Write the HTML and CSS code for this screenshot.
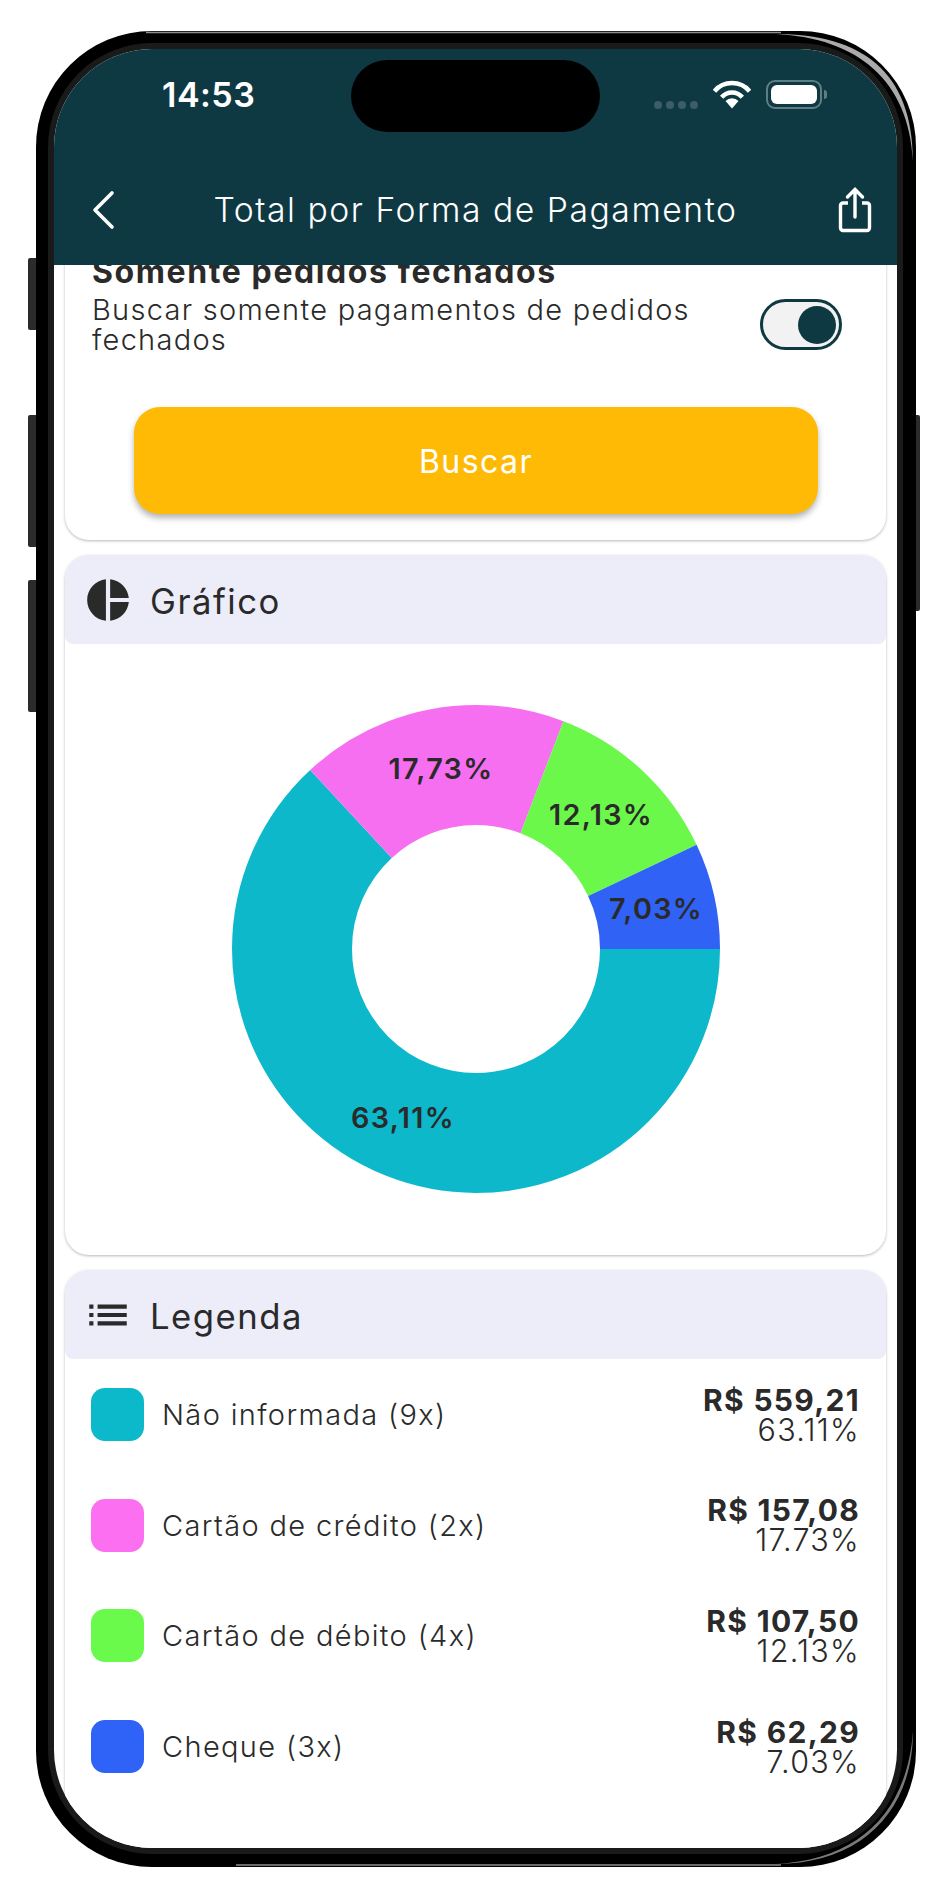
FILE: index.html
```html
<!DOCTYPE html>
<html lang="pt-BR">
<head>
    <meta charset="UTF-8">
    <meta name="viewport" content="width=device-width, initial-scale=1.0">
    <title>Total por Forma de Pagamento</title>
    <link rel="stylesheet" href="styles.css">
</head>
<body>
    <div class="phone">
        <span class="side-btn side-mute"></span>
        <span class="side-btn side-up"></span>
        <span class="side-btn side-down"></span>
        <span class="side-btn side-power"></span>

        <!-- metal edge of the frame -->
        <svg class="frame-edge" width="880" height="1836" viewBox="0 0 880 1836">
            <path d="M110 1.500H745" stroke="#8f8f8f" stroke-width="1.500" fill="none"/>
            <path d="M740 3C825 3 877 40 877 130C873 49 821 7 740 3Z" fill="#aaa"/>
            <path d="M877 1700C877 1780 825 1833 740 1833C820 1829 871 1784 877 1700Z" fill="#7a7a7a"/>
            <path d="M745 1834H200" stroke="#6a6a6a" stroke-width="2" fill="none"/>
        </svg>

        <div class="bezel">
            <div class="screen">
                <header class="topbar">
                    <div class="status">
                        <span class="time">14:53</span>
                        <span class="island"></span>
                        <div class="status-icons">
                            <span class="signal"><i></i><i></i><i></i><i></i></span>
                            <svg class="wifi" width="38" height="29" viewBox="0 0 38 29" fill="none">
                                <path d="M1.400 11.200A23 23 0 0 1 36.600 11.200" stroke="#fff" stroke-width="4.500"/>
                                <path d="M8.700 17.300A13.500 13.500 0 0 1 29.300 17.300" stroke="#fff" stroke-width="4.500"/>
                                <path d="M19 28.500L12.500 21A9 9 0 0 1 25.500 21Z" fill="#fff"/>
                            </svg>
                            <span class="battery"><span class="battery-level"></span></span>
                            <span class="battery-cap"></span>
                        </div>
                    </div>
                    <nav class="navbar">
                        <svg class="back" width="26" height="42" viewBox="0 0 26 42" fill="none">
                            <path d="M22 4L5 21L22 38" stroke="#fff" stroke-width="3.600" stroke-linecap="round" stroke-linejoin="round"/>
                        </svg>
                        <h1>Total por Forma de Pagamento</h1>
                        <svg class="share" width="38" height="48" viewBox="0 0 38 48" fill="none">
                            <path d="M13 17H8a2.500 2.500 0 0 0-2.500 2.500V42A2.500 2.500 0 0 0 8 44.500H32a2.500 2.500 0 0 0 2.500-2.500V19.500A2.500 2.500 0 0 0 32 17H27" stroke="#fff" stroke-width="3.400"/>
                            <path d="M20 31V4M12.500 11L20 3.500L27.500 11" stroke="#fff" stroke-width="3.400" stroke-linecap="round"/>
                        </svg>
                    </nav>
                </header>

                <main class="content">
                    <section class="card filter-card">
                        <div class="filter-row">
                            <div class="filter-text">
                                <h3>Somente pedidos fechados</h3>
                                <p>Buscar somente pagamentos de pedidos fechados</p>
                            </div>
                            <span class="toggle"><span class="knob"></span></span>
                        </div>
                        <button class="btn">Buscar</button>
                    </section>

                    <section class="card">
                        <div class="card-head">
                            <svg width="50" height="50" viewBox="0 0 24 24" fill="#2a2a2a">
                                <path d="M11 2v20c-5.070-.5-9-4.790-9-10s3.930-9.500 9-10zm2.030 0v8.990H22c-.47-4.740-4.240-8.520-8.970-8.990zm0 11.010V22c4.740-.47 8.500-4.250 8.970-8.990h-8.970z"/>
                            </svg>
                            <h2>Gráfico</h2>
                        </div>
                        <div class="chart">
                            <svg width="488" height="488" viewBox="0 0 488 488" fill="none">
                                <g stroke-width="120">
                                    <circle cx="244" cy="244" r="184" pathLength="100" stroke="#0db8cb" stroke-dasharray="63.11 36.89"/>
                                    <circle cx="244" cy="244" r="184" pathLength="100" stroke="#f66ff0" stroke-dasharray="17.73 82.27" stroke-dashoffset="-63.11"/>
                                    <circle cx="244" cy="244" r="184" pathLength="100" stroke="#6bf84b" stroke-dasharray="12.13 87.87" stroke-dashoffset="-80.84"/>
                                    <circle cx="244" cy="244" r="184" pathLength="100" stroke="#3062f5" stroke-dasharray="7.03 92.97" stroke-dashoffset="-92.97"/>
                                </g>
                                <text x="209" y="74">17,73%</text>
                                <text x="369" y="120">12,13%</text>
                                <text x="424" y="214">7,03%</text>
                                <text x="171" y="423">63,11%</text>
                            </svg>
                        </div>
                    </section>

                    <section class="card">
                        <div class="card-head">
                            <svg width="50" height="50" viewBox="0 0 24 24" fill="#2a2a2a">
                                <path d="M3 13h2v-2H3v2zm0 4h2v-2H3v2zm0-8h2V7H3v2zm4 4h14v-2H7v2zm0 4h14v-2H7v2zM7 7v2h14V7H7z"/>
                            </svg>
                            <h2>Legenda</h2>
                        </div>
                        <ul class="legend">
                            <li>
                                <span class="swatch swatch-teal"></span>
                                <span class="legend-name">Não informada (9x)</span>
                                <div class="legend-values"><strong>R$ 559,21</strong><span>63.11%</span></div>
                            </li>
                            <li>
                                <span class="swatch swatch-pink"></span>
                                <span class="legend-name">Cartão de crédito (2x)</span>
                                <div class="legend-values"><strong>R$ 157,08</strong><span>17.73%</span></div>
                            </li>
                            <li>
                                <span class="swatch swatch-green"></span>
                                <span class="legend-name">Cartão de débito (4x)</span>
                                <div class="legend-values"><strong>R$ 107,50</strong><span>12.13%</span></div>
                            </li>
                            <li>
                                <span class="swatch swatch-blue"></span>
                                <span class="legend-name">Cheque (3x)</span>
                                <div class="legend-values"><strong>R$ 62,29</strong><span>7.03%</span></div>
                            </li>
                        </ul>
                    </section>
                </main>
            </div>
        </div>
    </div>
</body>
</html>
```

FILE: styles.css
```css
* {
    box-sizing: border-box;
}
html, body {
    margin: 0;
    background-color: #fff;
}
body {
    font-family: Inter, "Liberation Sans", sans-serif;
    color: #2a2a2a;
    padding: 31px 0 0 36px;
    height: 1900px;
    overflow: hidden;
}
h1, h2, h3, p, ul {
    margin: 0;
    padding: 0;
}

/* phone frame */
.phone {
    position: relative;
    width: 880px;
    height: 1836px;
    background-color: #000;
    border-radius: 116px;
    padding: 12px 13px 13px 12px;
}
.bezel {
    height: 100%;
    background-color: #191b1a;
    border-radius: 104px;
    padding: 6px;
}
.screen {
    height: 100%;
    background-color: #fff;
    border-radius: 98px;
    overflow: hidden;
    display: flex;
    flex-direction: column;
}
.frame-edge {
    position: absolute;
    top: 0;
    left: 0;
}
.side-btn {
    position: absolute;
    width: 8px;
    background-color: #2b2b2b;
    border-radius: 2px 0 0 2px;
}
.side-mute {
    left: -8px;
    top: 227px;
    height: 72px;
}
.side-up {
    left: -8px;
    top: 384px;
    height: 132px;
}
.side-down {
    left: -8px;
    top: 549px;
    height: 132px;
}
.side-power {
    right: -4px;
    top: 384px;
    width: 4px;
    height: 196px;
    border-radius: 0 2px 2px 0;
}

/* top bar */
.topbar {
    flex: none;
    height: 216px;
    background-color: #0f3942;
    color: #fff;
}
.status {
    position: relative;
    height: 112px;
}
.time {
    position: absolute;
    left: 108px;
    top: 26px;
    font-size: 34px;
    font-weight: 600;
    letter-spacing: 0.5px;
    line-height: 40px;
}
.island {
    position: absolute;
    left: 297px;
    top: 11px;
    width: 249px;
    height: 72px;
    background-color: #000;
    border-radius: 36px;
}
.status-icons {
    position: absolute;
    left: 600px;
    top: 31px;
    display: flex;
    align-items: center;
}
.signal {
    display: flex;
    gap: 4px;
    margin: 20px 15px 0 0;
}
.signal i {
    width: 8px;
    height: 8px;
    border-radius: 50%;
    background-color: #3d5b6b;
}
.wifi {
    margin-right: 15px;
}
.battery {
    width: 56px;
    height: 29px;
    border: 2px solid #5d7f84;
    border-radius: 9px;
    padding: 3px;
}
.battery-level {
    display: block;
    height: 100%;
    background-color: #fff;
    border-radius: 6px;
}
.battery-cap {
    width: 3px;
    height: 9px;
    margin-left: 2px;
    background-color: #5d7f84;
    border-radius: 0 3px 3px 0;
}
.navbar {
    display: flex;
    align-items: center;
    justify-content: space-between;
    height: 80px;
    padding: 0 24px 0 36px;
    margin-top: 9px;
}
.navbar h1 {
    font-size: 33.700px;
    font-weight: 300;
    letter-spacing: 1.530px;
    line-height: 40px;
}

/* content */
.content {
    flex: 1;
    min-height: 0;
    overflow: hidden;
    padding: 0 11px;
    display: flex;
    flex-direction: column;
    gap: 15px;
}
.card {
    flex: none;
    background-color: #fff;
    border-radius: 24px;
    box-shadow: 0 1px 3px rgba(0, 0, 0, 0.28);
}
.filter-card {
    margin-top: -30px;
    padding: 19px 26px 26px 27px;
}
.filter-row {
    display: flex;
    align-items: flex-start;
    justify-content: space-between;
    padding-right: 18px;
}
.filter-text {
    width: 640px;
}
.filter-text h3 {
    font-size: 32px;
    font-weight: 700;
    letter-spacing: 1.600px;
    line-height: 36px;
}
.filter-text p {
    font-size: 29px;
    font-weight: 350;
    letter-spacing: 1.270px;
    line-height: 30px;
    margin-top: 5px;
}
.toggle {
    width: 82px;
    height: 51px;
    margin-top: 45px;
    border: 3px solid #0f3942;
    border-radius: 26px;
    background-color: #f2f2f2;
    display: flex;
    align-items: center;
    justify-content: flex-end;
    padding-right: 3px;
}
.knob {
    width: 38px;
    height: 38px;
    border-radius: 50%;
    background-color: #0f3942;
}
.btn {
    display: block;
    width: 684px;
    height: 107px;
    margin: 52px 0 0 42px;
    padding-top: 3px;
    font-family: inherit;
    font-size: 32px;
    font-weight: 400;
    letter-spacing: 1.450px;
    color: #fff;
    background-color: #ffba05;
    border: none;
    border-radius: 26px;
    box-shadow: 0 4px 6px rgba(0, 0, 0, 0.3);
}
.card-head {
    display: flex;
    align-items: center;
    gap: 17px;
    height: 89px;
    padding: 2px 0 0 18px;
    background-color: #ecedf8;
    border-radius: 24px 24px 8px 8px;
}
.card-head svg {
    margin-top: -2px;
}
.card-head h2 {
    font-size: 34.700px;
    font-weight: 400;
    letter-spacing: 1.500px;
}

/* donut */
.chart {
    display: flex;
    justify-content: center;
    padding: 61px 0 62px;
}
.chart text {
    font-size: 28.800px;
    font-weight: 600;
    letter-spacing: 1.300px;
    fill: #2a2a2a;
    text-anchor: middle;
}

/* legend */
.legend {
    list-style: none;
    padding: 29px 26px 120px 26px;
    display: flex;
    flex-direction: column;
    gap: 57.700px;
}
.legend li {
    display: flex;
    align-items: center;
    height: 53px;
}
.swatch {
    flex: none;
    width: 53px;
    height: 53px;
    border-radius: 14px;
    margin-right: 18px;
}
.swatch-teal {
    background-color: #0bb9ca;
}
.swatch-pink {
    background-color: #fb6ff0;
}
.swatch-green {
    background-color: #69fa4c;
}
.swatch-blue {
    background-color: #2f62f6;
}
.legend-name {
    flex: 1;
    font-size: 29px;
    font-weight: 350;
    letter-spacing: 1.350px;
}
.legend-values {
    display: flex;
    flex-direction: column;
    align-items: flex-end;
    font-size: 30px;
    line-height: 30px;
}
.legend-values strong {
    font-weight: 700;
    letter-spacing: 1.300px;
}
.legend-values span {
    font-size: 30.500px;
    font-weight: 350;
    letter-spacing: 1.300px;
}
```
